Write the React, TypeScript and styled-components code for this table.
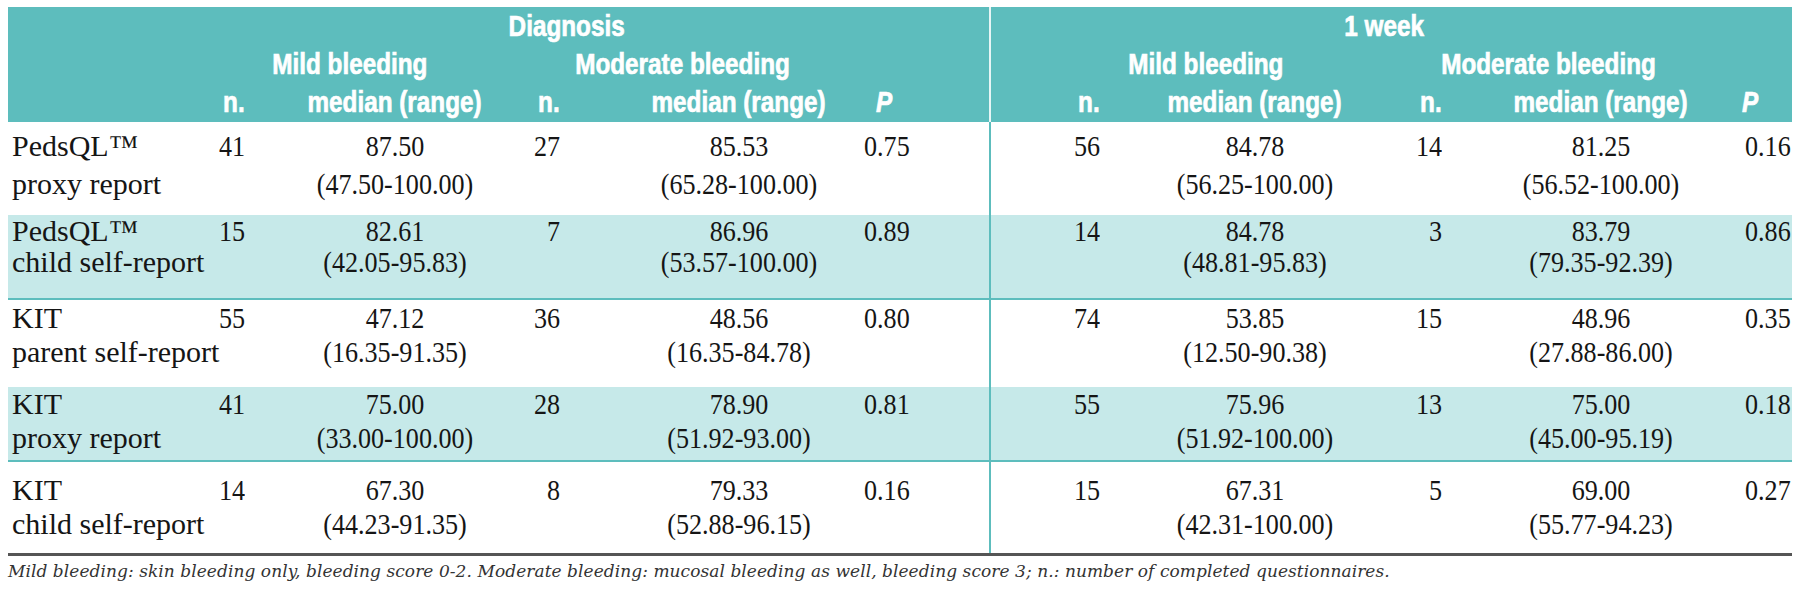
import React from 'react';
import styled, { createGlobalStyle } from 'styled-components';

const TEAL = '#5dbdbd';
const SHADE = '#c6e9e9';

const GlobalStyle = createGlobalStyle`
  html, body {
    margin: 0;
    padding: 0;
    background: #ffffff;
  }
`;

const Page = styled.div`
  padding: 7px 8px 0 8px;
  font-family: "Liberation Serif", "Times New Roman", serif;
  color: #151515;
`;

const Table = styled.table`
  width: 1784px;
  table-layout: fixed;
  border-collapse: separate;
  border-spacing: 0;
  border-bottom: 3px solid #555555;
`;

const Head = styled.thead`
  background: ${TEAL};
  color: #ffffff;
`;

const HeadRow = styled.tr<{ $h: number }>`
  height: ${(p) => p.$h}px;
`;

const HeadCell = styled.th<{ $align?: string; $pl?: number; $pr?: number; $divide?: boolean }>`
  padding: 0 ${(p) => p.$pr ?? 0}px 0 ${(p) => p.$pl ?? 0}px;
  text-align: ${(p) => p.$align ?? 'center'};
  vertical-align: top;
  font: bold 30px/38px "Liberation Sans", Arial, sans-serif;
  white-space: nowrap;
  border-left: ${(p) => (p.$divide ? '2px solid rgba(255, 255, 255, 0.85)' : 'none')};
`;

const HeadText = styled.span<{ $origin?: string; $italic?: boolean }>`
  display: inline-block;
  transform: scaleX(0.81);
  transform-origin: ${(p) => p.$origin ?? 'center'};
  font-style: ${(p) => (p.$italic ? 'italic' : 'normal')};
  -webkit-text-stroke: 0.7px #ffffff;
`;

const BodyRow = styled.tr<{ $shade?: boolean; $h: number; $lh: number }>`
  height: ${(p) => p.$h}px;
  line-height: ${(p) => p.$lh}px;
  background: ${(p) => (p.$shade ? SHADE : '#ffffff')};

  & > td {
    border-bottom: ${(p) => (p.$shade ? `2px solid ${TEAL}` : 'none')};
  }
`;

const Cell = styled.td<{ $align?: string; $pl?: number; $pr?: number; $pt?: number; $divide?: boolean }>`
  padding: ${(p) => p.$pt ?? 0}px ${(p) => p.$pr ?? 0}px 0 ${(p) => p.$pl ?? 0}px;
  text-align: ${(p) => p.$align ?? 'left'};
  vertical-align: top;
  font-size: 30px;
  white-space: nowrap;
  border-left: ${(p) => (p.$divide ? `2px solid ${TEAL}` : 'none')};
`;

const Num = styled.span<{ $origin?: string }>`
  display: block;
  transform: scaleX(0.87);
  transform-origin: ${(p) => p.$origin ?? 'center'};
`;

const Note = styled.p`
  margin: 5px 0 0 0;
  font: italic 17px/20px "DejaVu Serif", serif;
  letter-spacing: 0.06px;
  color: #333333;
  white-space: nowrap;
`;

type Group = { n: string; med: string; range: string };
type Row = {
  name: string;
  kind: string;
  diag: [Group, Group, string];
  week: [Group, Group, string];
  shade?: boolean;
  h: number;
  lh: number;
  pt: number;
};

const rows: Row[] = [
  {
    name: 'PedsQL™', kind: 'proxy report', h: 93, lh: 38, pt: 5,
    diag: [{ n: '41', med: '87.50', range: '(47.50-100.00)' }, { n: '27', med: '85.53', range: '(65.28-100.00)' }, '0.75'],
    week: [{ n: '56', med: '84.78', range: '(56.25-100.00)' }, { n: '14', med: '81.25', range: '(56.52-100.00)' }, '0.16'],
  },
  {
    name: 'PedsQL™', kind: 'child self-report', h: 85, lh: 31, pt: 0, shade: true,
    diag: [{ n: '15', med: '82.61', range: '(42.05-95.83)' }, { n: '7', med: '86.96', range: '(53.57-100.00)' }, '0.89'],
    week: [{ n: '14', med: '84.78', range: '(48.81-95.83)' }, { n: '3', med: '83.79', range: '(79.35-92.39)' }, '0.86'],
  },
  {
    name: 'KIT', kind: 'parent self-report', h: 87, lh: 34, pt: 1,
    diag: [{ n: '55', med: '47.12', range: '(16.35-91.35)' }, { n: '36', med: '48.56', range: '(16.35-84.78)' }, '0.80'],
    week: [{ n: '74', med: '53.85', range: '(12.50-90.38)' }, { n: '15', med: '48.96', range: '(27.88-86.00)' }, '0.35'],
  },
  {
    name: 'KIT', kind: 'proxy report', h: 75, lh: 34, pt: 0, shade: true,
    diag: [{ n: '41', med: '75.00', range: '(33.00-100.00)' }, { n: '28', med: '78.90', range: '(51.92-93.00)' }, '0.81'],
    week: [{ n: '55', med: '75.96', range: '(51.92-100.00)' }, { n: '13', med: '75.00', range: '(45.00-95.19)' }, '0.18'],
  },
  {
    name: 'KIT', kind: 'child self-report', h: 91, lh: 34, pt: 11,
    diag: [{ n: '14', med: '67.30', range: '(44.23-91.35)' }, { n: '8', med: '79.33', range: '(52.88-96.15)' }, '0.16'],
    week: [{ n: '15', med: '67.31', range: '(42.31-100.00)' }, { n: '5', med: '69.00', range: '(55.77-94.23)' }, '0.27'],
  },
];

// column widths, left to right (sum 1784)
const widths = [177, 65, 260, 55, 290, 134, 116, 300, 42, 288, 57];

// per-side cell offsets: n1, median1, n2, median2, P
const diagPad = { n1: 5, med1: 30, n2: 5, med2: 58, pHead: 21, p: 9 };
const weekPad = { n1: 5, med1: 0, n2: 5, med2: 20, pHead: 7, p: 10 };

const Median: React.FC<{ g: Group }> = ({ g }) => (
  <>
    <Num>{g.med}</Num>
    <Num>{g.range}</Num>
  </>
);

const Side: React.FC<{ data: [Group, Group, string]; pad: typeof diagPad; pt: number; divide?: boolean }> = ({
  data,
  pad,
  pt,
  divide,
}) => (
  <>
    <Cell $align="right" $pr={pad.n1} $pt={pt} $divide={divide}>
      <Num $origin="right">{data[0].n}</Num>
    </Cell>
    <Cell $align="center" $pl={pad.med1} $pt={pt}>
      <Median g={data[0]} />
    </Cell>
    <Cell $align="right" $pr={pad.n2} $pt={pt}>
      <Num $origin="right">{data[1].n}</Num>
    </Cell>
    <Cell $align="center" $pl={pad.med2} $pt={pt}>
      <Median g={data[1]} />
    </Cell>
    <Cell $pl={pad.p} $pt={pt}>
      <Num $origin="left">{data[2]}</Num>
    </Cell>
  </>
);

const SubHead: React.FC<{ pad: typeof diagPad; divide?: boolean }> = ({ pad, divide }) => (
  <>
    <HeadCell $align="right" $pr={pad.n1} $divide={divide}>
      <HeadText $origin="right">n.</HeadText>
    </HeadCell>
    <HeadCell $pl={pad.med1}>
      <HeadText>median (range)</HeadText>
    </HeadCell>
    <HeadCell $align="right" $pr={pad.n2}>
      <HeadText $origin="right">n.</HeadText>
    </HeadCell>
    <HeadCell $pl={pad.med2}>
      <HeadText>median (range)</HeadText>
    </HeadCell>
    <HeadCell $align="left" $pl={pad.pHead}>
      <HeadText $origin="left" $italic>
        P
      </HeadText>
    </HeadCell>
  </>
);

export default function App() {
  return (
    <Page>
      <GlobalStyle />
      <Table>
        <colgroup>
          {widths.map((w, i) => (
            <col key={i} style={{ width: w }} />
          ))}
        </colgroup>
        <Head>
          <HeadRow $h={38}>
            <HeadCell />
            <HeadCell colSpan={5} $pr={40}>
              <HeadText>Diagnosis</HeadText>
            </HeadCell>
            <HeadCell colSpan={5} $pr={14} $divide>
              <HeadText>1 week</HeadText>
            </HeadCell>
          </HeadRow>
          <HeadRow $h={38}>
            <HeadCell />
            <HeadCell colSpan={2} $pl={5}>
              <HeadText>Mild bleeding</HeadText>
            </HeadCell>
            <HeadCell colSpan={2}>
              <HeadText>Moderate bleeding</HeadText>
            </HeadCell>
            <HeadCell />
            <HeadCell colSpan={2} $pl={16} $divide>
              <HeadText>Mild bleeding</HeadText>
            </HeadCell>
            <HeadCell colSpan={2} $pr={42}>
              <HeadText>Moderate bleeding</HeadText>
            </HeadCell>
            <HeadCell />
          </HeadRow>
          <HeadRow $h={39}>
            <HeadCell />
            <SubHead pad={diagPad} />
            <SubHead pad={weekPad} divide />
          </HeadRow>
        </Head>
        <tbody>
          {rows.map((r, i) => (
            <BodyRow key={i} $shade={r.shade} $h={r.h} $lh={r.lh}>
              <Cell $pl={4} $pt={r.pt}>
                <div>{r.name}</div>
                <div>{r.kind}</div>
              </Cell>
              <Side data={r.diag} pad={diagPad} pt={r.pt} />
              <Side data={r.week} pad={weekPad} pt={r.pt} divide />
            </BodyRow>
          ))}
        </tbody>
      </Table>
      <Note>
        Mild bleeding: skin bleeding only, bleeding score 0-2. Moderate bleeding: mucosal bleeding as well, bleeding score
        3; n.: number of completed questionnaires.
      </Note>
    </Page>
  );
}
